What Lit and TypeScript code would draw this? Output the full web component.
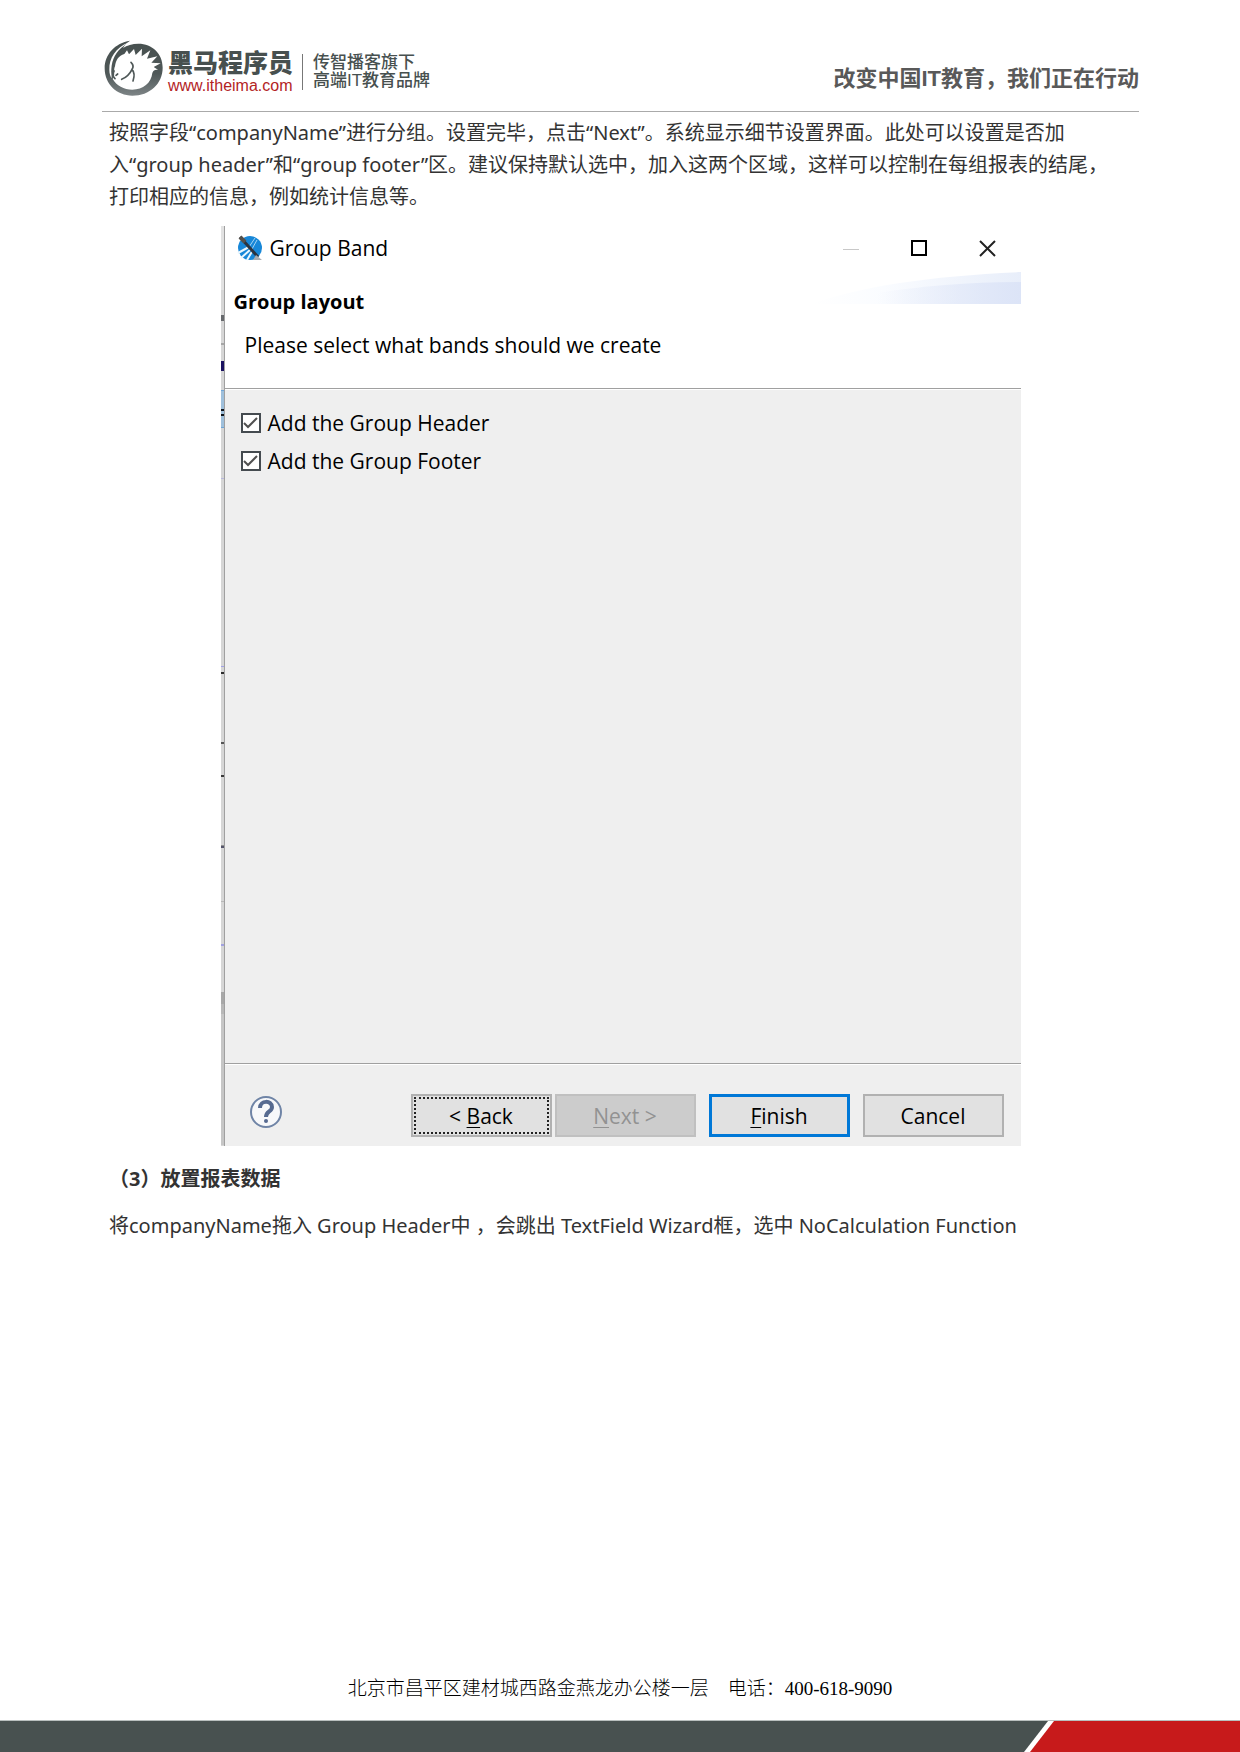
import { LitElement, html, css, svg } from "lit";
import { customElement } from "lit/decorators.js";

const horse = svg`
  <defs>
    <linearGradient id="ring" x1="0" y1="0" x2="0" y2="1">
      <stop offset="0" stop-color="#47504f" />
      <stop offset="0.6" stop-color="#4f5858" />
      <stop offset="1" stop-color="#7d8486" />
    </linearGradient>
  </defs>
  <path fill="url(#ring)" d="M121 33 C76 40 45 74 45 116 C45 164 82 198 128 198 C180 198 219 162 219 114 C219 72 188 42 146 42 C128 42 112 47 100 55 C106 45 113 38 121 33 Z" />
  <path fill="#fff" d="M69 148 C78 139 70 122 76 110 C79 90 87 78 104 73 L112 62 L118 74 L133 58 L138 76 L157 57 L156 80 L182 62 L172 87 L203 80 L185 99 L213 101 L192 112 L206 121 C197 119 191 122 188 130 C185 160 160 180 128 180 C103 180 80 168 69 148 Z" />
  <path fill="#fff" d="M117 38 C78 54 58 86 59 120 C59 132 62 140 66 146 C66 136 64 130 65 118 C67 88 78 66 103 48 Z" />
  <path fill="none" stroke="#4f5858" stroke-width="5" stroke-linecap="round" d="M73 124 C68 132 69 140 76 147 M124 98 C131 105 132 112 127 119 C121 132 110 143 96 149 M127 119 C135 128 134 142 130 154 M79 137 L84 133" />`;

const appIcon = svg`
  <circle cx="13" cy="13" r="12" fill="#1787d8" />
  <path d="M1 18 L12 12 M4 23 L14 14 M10 25 L16 15" stroke="#eaf6fd" stroke-width="2" />
  <path d="M12 12 L18 3 M15 14 L20 5" stroke="#a5d4f2" />
  <path d="M3 2 L21 22" stroke="#2b3440" stroke-width="3" />
  <path d="M3 2 L8 7" stroke="#53504b" stroke-width="4" />
  <path d="M19 20 L25 25 L16 25 Z" fill="#a9aeb3" />`;

const edgeMarks: [number, number, string][] = [
  [0, 64, "#e2e2e2"], [89, 6, "#66686c"], [117, 2, "#a6a6a6"], [135, 10, "#1a1160"],
  [164, 38, "#9fc0dc"], [164, 1, "#6fa5d6"], [183, 2, "#10151c"], [188, 2, "#10151c"], [201, 1, "#6fa5d6"],
  [252, 1, "#b9b9dc"], [440, 1, "#a2a2e6"], [446, 2, "#2c2c2c"], [516, 2, "#555"],
  [549, 2, "#3a3a3a"], [619, 1, "#909090"], [620, 2, "#55556c"], [675, 1, "#b8b8b8"], [718, 2, "#a2a2e0"],
  [766, 153, "#c6c6c6"], [766, 12, "#a8a8a8"], [778, 10, "#b8b8b8"],
];

@customElement("wizard-dialog")
export class WizardDialog extends LitElement {
  static styles = css`
    :host { display: flex; color: #000; font: 21px/28px "Open Sans", "Noto Sans", sans-serif; }
    .edge { flex: none; width: 3px; background: #d6d6d6; border-right: 1px solid #a0a0a0; overflow: hidden; }
    .edge svg { display: block; }
    .window { flex: 1; display: flex; flex-direction: column; background: #efefef; min-width: 0; }
    .head { background: #fff; border-bottom: 1px solid #a0a0a0; padding-bottom: 29px; }
    .titlebar { display: flex; align-items: center; height: 44px; padding: 0 25px 0 12px; }
    .title { flex: 1; margin-left: 7px; }
    .controls { display: flex; gap: 51px; }
    .controls button { border: 0; padding: 0; background: none; width: 17px; height: 17px; }
    .controls svg, .help svg { display: block; }
    .banner { display: flex; justify-content: space-between; align-items: flex-start; height: 46px; margin-top: 2px; }
    h2 { margin: 0; padding: 16px 0 0 9px; font-size: 20px; font-weight: 700; line-height: 28px; }
    .swoosh { width: 210px; height: 32px; }
    .message { margin: 0; padding: 13px 20px 0; }
    .options { flex: 1; display: flex; flex-direction: column; gap: 10px; min-height: 640px; padding: 19px 16px 14px; border-top: 1px solid #fff; border-bottom: 1px solid #a0a0a0; }
    .option { display: flex; align-items: center; gap: 7px; }
    .option input {
      appearance: none; width: 20px; height: 20px; margin: 0; border: 2px solid #454b50; background: #fff
        url("data:image/svg+xml,%3Csvg xmlns='http://www.w3.org/2000/svg' viewBox='0 0 16 16'%3E%3Cpath d='M1 8l4 4 9-9' fill='none' stroke='%23505050' stroke-width='2'/%3E%3C/svg%3E");
    }
    .option input:not(:checked) { background: #fff; }
    .actions { display: flex; align-items: flex-start; padding: 29px 17px 9px 25px; border-top: 1px solid #fff; }
    .help { border: 0; padding: 2px 0 0; background: none; margin-right: auto; }
    .push {
      width: 141px; height: 43px; margin-left: 13px; padding: 0; border: 2px solid #b1b1b1; background: #e1e1e1;
      color: #000; font: inherit;
    }
    .push.focus { outline: 2px dotted #222; outline-offset: -5px; }
    .push.next { margin-left: 3px; }
    .push:disabled { color: #929292; background: #ccc; border-color: #c0c0c0; }
    .push.primary { border: 3px solid #0078d7; }
    u { text-underline-offset: 3px; text-decoration-thickness: 1px; }
  `;

  render() {
    return html`
      <div class="edge">
        <svg width="4" height="919" aria-hidden="true">
          ${edgeMarks.map(([y, h, c]) => svg`<rect x="0" y=${y} width="4" height=${h} fill=${c} />`)}
        </svg>
      </div>
      <div class="window" role="dialog" aria-labelledby="title">
        <div class="head">
          <div class="titlebar">
            <svg width="26" height="26" viewBox="0 0 26 26" aria-hidden="true">${appIcon}</svg>
            <span class="title" id="title">Group Band</span>
            <div class="controls">
              <button aria-label="Minimize"><svg width="17" height="17"><path d="M0 9.5H16" stroke="#c8c8c8" /></svg></button>
              <button aria-label="Maximize"><svg width="17" height="17"><rect x="1" y="1" width="14" height="14" fill="none" stroke="#000" stroke-width="2" /></svg></button>
              <button aria-label="Close"><svg width="17" height="17"><path d="M1 1L16 16M16 1L1 16" stroke="#222" stroke-width="2" /></svg></button>
            </div>
          </div>
          <div class="banner">
            <h2>Group layout</h2>
            <svg class="swoosh" viewBox="0 0 210 32" aria-hidden="true">
              <defs>
                <linearGradient id="sw"><stop offset="0" stop-color="#fff" /><stop offset="0.35" stop-color="#fafcff" /><stop offset="1" stop-color="#e8eefa" /></linearGradient>
                <linearGradient id="sx"><stop offset="0" stop-color="#dfe6f8" stop-opacity="0" /><stop offset="1" stop-color="#dce4f7" /></linearGradient>
              </defs>
              <path d="M0 32 C50 14 120 4 210 0 V32 Z" fill="url(#sw)" />
              <path d="M66 32 V21 C110 14 160 10 210 10 V32 Z" fill="url(#sx)" />
            </svg>
          </div>
          <p class="message">Please select what bands should we create</p>
        </div>
        <div class="options">
          <label class="option"><input type="checkbox" checked />Add the Group Header</label>
          <label class="option"><input type="checkbox" checked />Add the Group Footer</label>
        </div>
        <div class="actions">
          <button class="help" aria-label="Help">
            <svg width="32" height="32" viewBox="0 0 32 32">
              <circle cx="16" cy="16" r="15" fill="#f7f8fa" stroke="#6f84a6" stroke-width="2" />
              <path d="M10 12 C10 4 22 4 22 11 C22 16 16 15 16 21" fill="none" stroke="#566a90" stroke-width="4" />
              <circle cx="16" cy="25" r="2" fill="#566a90" />
            </svg>
          </button>
          <button class="push focus">&lt; <u>B</u>ack</button>
          <button class="push next" disabled><u>N</u>ext &gt;</button>
          <button class="push primary"><u>F</u>inish</button>
          <button class="push">Cancel</button>
        </div>
      </div>
    `;
  }
}

@customElement("app-root")
export class AppRoot extends LitElement {
  static styles = css`
    :host {
      display: flex; flex-direction: column; min-height: 100vh; background: #fff; color: #333;
      font: 20px/32px "Noto Sans", "Noto Sans CJK SC", sans-serif;
    }
    .top {
      display: flex; align-items: flex-start; margin: 0 101px 0 102px; padding-top: 40px; height: 71px;
      border-bottom: 1px solid #aaa; font-family: "Liberation Sans", "Noto Sans CJK SC", sans-serif;
    }
    .logo { flex: none; }
    .brand { margin: 9px 9px 0 3px; line-height: 28px; font-size: 25px; font-weight: 900; color: #47504f; }
    .brand a { display: block; color: #b3241f; font-size: 16px; font-weight: 400; line-height: 18px; text-decoration: none; }
    .tagline { margin-top: 14px; padding-left: 10px; border-left: 1px solid #777; font-size: 17px; font-weight: 500; line-height: 18px; color: #47504f; }
    .tagline span { display: block; }
    .slogan { margin: 23px 0 0 auto; font-size: 22px; line-height: 32px; font-weight: 700; color: #595959; }
    main { flex: 1; padding: 5px 108px 0 109px; }
    p { margin: 0; }
    .intro { padding-bottom: 13px; }
    .dialog { max-width: 800px; margin: 0 auto; }
    h1 { margin: 17px 0 15px; font-size: 20px; line-height: 32px; font-weight: 700; }
    .address {
      margin-bottom: 15px; text-align: center; white-space: pre-wrap; color: #000; font-size: 19px; font-weight: 300;
      font-family: "Liberation Serif", "Noto Sans CJK SC", serif;
    }
    .bar { display: flex; height: 31px; border-top: 1px solid #b9bfbe; }
    .dark { flex: 1; background: #485150; clip-path: polygon(0 0, 100% 0, calc(100% - 24px) 100%, 0 100%); }
    .red { width: 210px; margin-left: -18px; background: #c71a1b; clip-path: polygon(24px 0, 100% 0, 100% 100%, 0 100%); }
  `;

  render() {
    return html`
      <header class="top">
        <svg class="logo" width="63" height="57" viewBox="37 31 189 171" aria-hidden="true">${horse}</svg>
        <div class="brand">黑马程序员<a href="http://www.itheima.com">www.itheima.com</a></div>
        <div class="tagline"><span>传智播客旗下</span><span>高端IT教育品牌</span></div>
        <div class="slogan">改变中国IT教育，我们正在行动</div>
      </header>
      <main>
        <p class="intro">
          按照字段“companyName”进行分组。设置完毕，点击“Next”。系统显示细节设置界面。此处可以设置是否加<br />入“group header”和“group footer”区。建议保持默认选中，加入这两个区域，这样可以控制在每组报表的结尾，<br />打印相应的信息，例如统计信息等。
        </p>
        <wizard-dialog class="dialog"></wizard-dialog>
        <h1>（3）放置报表数据</h1>
        <p>将companyName拖入 Group Header中 ，会跳出 TextField Wizard框，选中 NoCalculation Function</p>
      </main>
      <footer>
        <p class="address">北京市昌平区建材城西路金燕龙办公楼一层　电话：400-618-9090</p>
        <div class="bar"><div class="dark"></div><div class="red"></div></div>
      </footer>
    `;
  }
}
